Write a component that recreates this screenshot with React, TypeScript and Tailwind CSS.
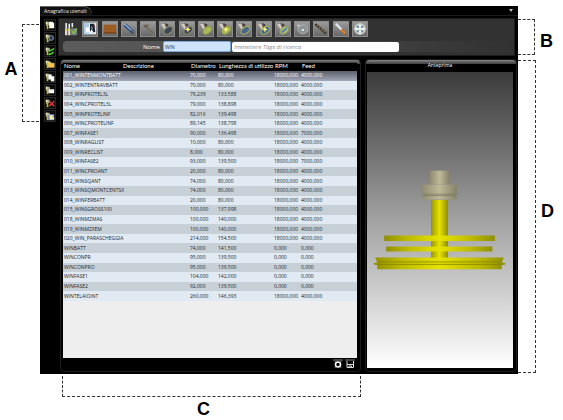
import type { ReactNode } from "react";
import clsx from "clsx";

type Row = [string, string, string, string, string];

const rows: Row[] = [
  ["001_WINTENMONTBATT", "70,000", "80,000", "18000,000", "4000,000"],
  ["002_WINTENTRAVBATT", "70,000", "80,000", "18000,000", "4000,000"],
  ["003_WINPROTEL3L", "79,239", "133,588", "18000,000", "4000,000"],
  ["004_WINCPROTEL3L", "79,000", "138,898", "18000,000", "4000,000"],
  ["005_WINPROTELINF", "82,016", "139,498", "18000,000", "4000,000"],
  ["006_WINCPROTELINF", "89,145", "138,798", "18000,000", "4000,000"],
  ["007_WINFASE1", "90,000", "136,498", "18000,000", "7000,000"],
  ["008_WINRAGLIST", "10,000", "80,000", "18000,000", "4000,000"],
  ["009_WINRECLIST", "8,000", "80,000", "18000,000", "4000,000"],
  ["010_WINFASE2", "93,000", "139,500", "18000,000", "7000,000"],
  ["011_WINCPROANT", "20,000", "80,000", "18000,000", "4000,000"],
  ["012_WINSQANT", "74,000", "80,000", "18000,000", "4000,000"],
  ["013_WINSQMONTCENTSX", "74,000", "80,000", "18000,000", "4000,000"],
  ["014_WINFERBATT", "20,000", "80,000", "18000,000", "4000,000"],
  ["015_WINSGROSS100", "100,000", "137,998", "18000,000", "4000,000"],
  ["018_WINMZMAS", "100,000", "140,000", "18000,000", "4000,000"],
  ["019_WINMZFEM", "100,000", "140,000", "18000,000", "4000,000"],
  ["020_WIN_PARASCHEGGIA", "214,000", "154,500", "18000,000", "4000,000"],
  ["WINBATT", "74,000", "141,500", "0,000", "0,000"],
  ["WINCONPR", "95,000", "139,500", "0,000", "0,000"],
  ["WINCONPRO", "95,000", "139,500", "0,000", "0,000"],
  ["WINFASE1", "104,000", "142,000", "0,000", "0,000"],
  ["WINFASE2", "92,000", "139,500", "0,000", "0,000"],
  ["WINTELAIOINT", "260,000", "146,393", "18000,000", "4000,000"],
];

const headers = ["Nome", "Descrizione", "Diametro", "Lunghezza di utilizzo", "RPM", "Feed"];

function Star() {
  return <path d="M9 5l1 2.500 2.500 1-2.500 1L9 12l-1-2.500-2.500-1 2.500-1z" fill="#fdf27a" />;
}

function Saw({ fill, stroke, star }: { fill: string; stroke: string; star?: boolean }) {
  return (
    <>
      <path d="M1 2.500l6-1 3 3-4 5z" fill="#66574e" />
      <path d="M1 2.500l4-.6L7 7l-1.500 2z" fill="#d3cdc4" />
      <path d="M6.500 1.500l3 1.500-.5 2z" fill="#2f2b2b" />
      <ellipse cx="9.500" cy="9.500" rx="5.600" ry="3.600" transform="rotate(-38 9.500 9.500)" fill={fill} stroke={stroke} strokeWidth="1.300" />
      {star && <Star />}
    </>
  );
}

const tools: { name: string; art: ReactNode }[] = [
  {
    name: "Seleziona utensili",
    art: (
      <>
        <path d="M2.500 1v6M6 2v5M9.500 1v5" stroke="#f2f2f2" strokeWidth="1.800" />
        <path d="M2.500 7v8M6 7v8" stroke="#e3e0d0" strokeWidth="2.600" />
        <path d="M1 9h6.500" stroke="#d0c43c" strokeWidth="1.200" />
        <rect x="8" y="7" width="7" height="8" rx="1" fill="#777d80" />
        <path d="M9 10.500l2 2.500 3.500-5.500" fill="none" stroke="#7bd23c" strokeWidth="1.500" />
      </>
    ),
  },
  {
    name: "Puntatore",
    art: (
      <>
        <rect x="1" y="1" width="14" height="13" fill="#e8eef3" />
        <path d="M1 1h6v13H1z" fill="#a9c8e2" />
        <path d="M3 6h4v6H3z" fill="#f6fafd" />
        <path d="M8 2h5l1 9-2 1-2-4-2 3z" fill="#172030" />
        <path d="M9.500 5l1.500 3" stroke="#c9d4e0" strokeWidth="1" />
        <path d="M12 3l2 3" stroke="#bf4f44" strokeWidth="1" />
      </>
    ),
  },
  {
    name: "Pannello",
    art: (
      <>
        <rect x="1" y="3" width="14" height="10" fill="#9a5a20" />
        <path d="M1 6.500c4-1 8 1 14 0M1 9.500c5 1 9-1 14 0" fill="none" stroke="#a2632a" strokeWidth="1" />
        <path d="M1 12.500h14" stroke="#613410" strokeWidth="1" />
      </>
    ),
  },
  {
    name: "Punta",
    art: (
      <>
        <path d="M3 3l10 9" stroke="#2c4c76" strokeWidth="4" />
        <path d="M3 2.500l10 9" stroke="#b4d2ee" strokeWidth="1.200" />
        <path d="M10 10l3 3" stroke="#405067" strokeWidth="2.500" />
      </>
    ),
  },
  {
    name: "Punta svasata",
    art: (
      <>
        <path d="M2 3l8-.5L6 8z" fill="#796b60" />
        <path d="M4 4l9 9" stroke="#5e5144" strokeWidth="2" />
        <path d="M6 6l7 7.500" stroke="#91a66d" strokeWidth="1" />
      </>
    ),
  },
  { name: "Lama", art: <Saw fill="#3d4757" stroke="#8a8f6a" /> },
  { name: "Lama preferita", art: <Saw fill="#3d4757" stroke="#8a8f6a" star /> },
  { name: "Fresa", art: <Saw fill="#aab957" stroke="#8e994a" /> },
  { name: "Fresa preferita", art: <Saw fill="#aab957" stroke="#8e994a" star /> },
  { name: "Disco", art: <Saw fill="#49678b" stroke="#a6b25a" /> },
  { name: "Disco preferito", art: <Saw fill="#49678b" stroke="#a6b25a" star /> },
  {
    name: "Disco inclinato",
    art: (
      <>
        <Saw fill="#b2bf6a" stroke="#929b60" />
        <path d="M6.500 12l6-5" stroke="#477db4" strokeWidth="2" />
      </>
    ),
  },
  {
    name: "Mola",
    art: (
      <>
        <path d="M2 3h5L5 8z" fill="#c4c4c0" />
        <ellipse cx="9" cy="8.500" rx="5.500" ry="5" fill="#8e9292" stroke="#b4b6b2" strokeWidth="1" />
        <circle cx="9" cy="9" r="1.400" fill="#d4e5f5" />
      </>
    ),
  },
  {
    name: "Punta elicoidale",
    art: (
      <>
        <path d="M1.500 2.500L13.500 13" stroke="#322b24" strokeWidth="2.800" />
        <path d="M3 3.500l10 9" stroke="#c29a4d" strokeWidth="1.200" strokeDasharray="2 1.500" />
      </>
    ),
  },
  {
    name: "Punta a gradino",
    art: (
      <>
        <path d="M2 2l7 7" stroke="#e4e8ee" strokeWidth="2.600" />
        <path d="M8 8.500l5 4.500" stroke="#d77b26" strokeWidth="3" />
      </>
    ),
  },
  {
    name: "Orientamento",
    art: (
      <>
        <circle cx="8" cy="8" r="6" fill="#a9c4d3" stroke="#e3dfc0" strokeWidth="1.200" />
        <path d="M4.500 4.500l7 7M11.500 4.500l-7 7" stroke="#5f7b8b" strokeWidth="1.200" />
        <path d="M8 2.500v11M2.500 8h11" stroke="#fff" strokeWidth="1.600" />
        <circle cx="8" cy="8" r="1.600" fill="#f4f2d0" />
      </>
    ),
  },
];

const actions: { name: string; art: ReactNode }[] = [
  { name: "Nuovo", art: <path d="M5 2h4l2 2v6H5z" fill="#fff" /> },
  {
    name: "Cerca",
    art: (
      <>
        <circle cx="7.500" cy="6" r="2.800" fill="#26374b" stroke="#8fa4bd" />
        <path d="M6 8l-3 3" stroke="#8fa4bd" strokeWidth="1.200" />
      </>
    ),
  },
  { name: "Aggiorna", art: <path d="M5 7c1-3 4-2 6-4M4 10c3 0 5 0 6-3" fill="none" stroke="#45c93a" strokeWidth="2" /> },
  { name: "Apri", art: <path d="M4 4h3l1 1h3v5H4z" fill="#f6c23f" stroke="#ffe9a0" strokeWidth=".6" /> },
  { name: "Copia", art: <path d="M4 3h4v2h3v6H7V9H4z" fill="#fff" stroke="#aaa" strokeWidth=".4" /> },
  { name: "Incolla", art: <path d="M5 5h6v5H4V6z" fill="#f4f4f4" /> },
  { name: "Elimina", art: <path d="M5 4l6 6M11 4l-6 6" stroke="#e63b35" strokeWidth="1.700" /> },
  {
    name: "Salva",
    art: (
      <>
        <path d="M4 4h7v7H4z" fill="#99a6e3" />
        <path d="M6 5h3v3h2v2H6z" fill="#fff3a0" />
      </>
    ),
  },
];

function ActionRail() {
  return (
    <nav aria-label="Azioni" className="flex w-4 shrink-0 flex-col items-end gap-px pt-[3px]">
      {actions.map((a) => (
        <button key={a.name} type="button" aria-label={a.name} className="size-3 border border-[#252525] bg-[#0b0b0b]">
          <svg viewBox="0 0 12 12" className="size-full">
            <path d="M1 2h4l1 1v2L3 7H1z" fill="#a3a38a" />
            <path d="M1 2h2v3H1z" fill="#e4e0ac" />
            <path d="M2 6h2v5H2z" fill="#c4b828" />
            {a.art}
          </svg>
        </button>
      ))}
    </nav>
  );
}

function Toolbar() {
  return (
    <section className="mr-0.5 border border-[#1c1c1c] bg-[#323232] px-1 pt-[2px] pb-[3px]">
      <div className="flex max-w-[305px] justify-between">
        {tools.map((t, i) => (
          <button
            key={t.name}
            type="button"
            aria-label={t.name}
            className={clsx(
              "size-4 border",
              i === 0
                ? "border-[#323232] bg-[#323232]"
                : "border-[#8b8b8b] bg-linear-to-b from-[#9c9c9c] to-[#686868]",
            )}
          >
            <svg viewBox="0 0 16 16" className="size-full">
              {t.art}
            </svg>
          </button>
        ))}
      </div>
      <div className="mt-1 flex h-[11px] items-center rounded-sm bg-linear-to-r from-[#5c5c5c] via-[#4a4a4a] to-[#323232]">
        <label htmlFor="nome" className="w-[97px] text-right text-[6px] leading-[10px] text-white">
          Nome
        </label>
        <input
          id="nome"
          defaultValue="WIN"
          className="ml-[3px] h-[11px] w-[68px] rounded-xs border border-[#7fa9dc] bg-[#cfe3fb] px-px text-[5px] leading-[9px] text-[#333]"
        />
        <input
          aria-label="Tags di ricerca"
          placeholder="Immettere Tags di ricerca"
          className="ml-px h-[10px] w-[167px] rounded-xs bg-white px-0.5 text-[6px] leading-[9px] placeholder:text-[#8a8a8a] placeholder:italic"
        />
      </div>
    </section>
  );
}

function ToolTable() {
  return (
    <section className="flex min-w-0 flex-[294] flex-col rounded-t-sm rounded-b border border-[#1d1d1d] bg-black bg-[linear-gradient(#858585,#3c3c3c)] bg-size-[100%_4px] bg-no-repeat pr-[3px] pl-0.5">
      <div className="grow bg-[#eeeeee]">
        <table className="h-[241px] w-full table-fixed border-collapse text-left text-[5px] leading-[9px] whitespace-nowrap text-[#20262d]">
          <colgroup>
            <col className="w-[59px]" />
            <col className="w-[68px]" />
            <col className="w-[28px]" />
            <col className="w-[56px]" />
            <col className="w-[27px]" />
            <col />
          </colgroup>
          <thead>
            <tr className="h-[11px] bg-black bg-[linear-gradient(#858585,#3c3c3c)] bg-size-[100%_3px] bg-no-repeat font-[Lato,sans-serif] text-[6px] text-white">
              {headers.map((h) => (
                <th key={h} scope="col" className="px-px py-0 font-normal">
                  {h}
                </th>
              ))}
            </tr>
          </thead>
          <tbody>
            {rows.map(([name, ...values], i) => (
              <tr
                key={name}
                className={clsx(
                  i === 0
                    ? "bg-linear-to-b from-[#5c606c] to-[#a3a8b8] text-white"
                    : i % 2 === 0
                      ? "bg-[#c8d0d7]"
                      : "bg-[#e1eaf3]",
                )}
              >
                <td className="px-px py-0">{name}</td>
                <td className="p-0" />
                {values.map((v, k) => (
                  <td key={k} className="p-0">
                    {v}
                  </td>
                ))}
              </tr>
            ))}
          </tbody>
        </table>
      </div>
      <footer className="flex h-[13px] items-start justify-end gap-0.5 pt-px pr-0.5">
        <button type="button" aria-label="Impostazioni" className="h-2.5 w-2.5">
          <svg viewBox="0 0 10 10" className="size-full">
            <path d="M0 1h10" stroke="#888" strokeWidth="1" />
            <circle cx="5" cy="5.500" r="2.500" fill="none" stroke="#fff" strokeWidth="1.600" />
            <path d="M2 2.500l1 1M8 2.500l-1 1M2 8.500l1-1M8 8.500l-1-1" stroke="#ddd" strokeWidth="1" />
          </svg>
        </button>
        <button type="button" aria-label="Salva elenco" className="h-2.5 w-2.5">
          <svg viewBox="0 0 10 10" className="size-full">
            <path d="M0 1h10" stroke="#888" strokeWidth="1" />
            <path d="M2 2v6.500h6.500V2M2 5.500h6.500M4 8.500v-1.500h2.500v1.500" fill="none" stroke="#d8d8d8" strokeWidth="1" />
          </svg>
        </button>
      </footer>
    </section>
  );
}

function Preview() {
  return (
    <section className="flex min-w-0 flex-[146] flex-col rounded-t-sm rounded-b border border-[#1d1d1d] bg-black bg-[linear-gradient(#858585,#3c3c3c)] bg-size-[100%_4px] bg-no-repeat pr-[3px] pb-[3px] pl-px">
      <h2 className="h-3 pt-px text-center text-[5px] leading-[9px] text-white">Anteprima</h2>
      <div className="min-h-0 grow bg-linear-to-b from-[#3c3c3c] via-[#a2a2a2] to-white">
        <svg viewBox="367 71 146 297" preserveAspectRatio="xMidYMid meet" className="size-full" role="img" aria-label="Anteprima utensile">
          <defs>
            <linearGradient id="metal">
              <stop offset="0" stopColor="#8f8c71" />
              <stop offset=".5" stopColor="#bdb998" />
              <stop offset="1" stopColor="#85826a" />
            </linearGradient>
            <linearGradient id="shaft">
              <stop offset="0" stopColor="#989600" />
              <stop offset=".5" stopColor="#e6e300" />
              <stop offset="1" stopColor="#8e8c00" />
            </linearGradient>
            <linearGradient id="disc">
              <stop offset="0" stopColor="#8f8e00" />
              <stop offset=".2" stopColor="#bcb900" />
              <stop offset=".5" stopColor="#e6e300" />
              <stop offset=".8" stopColor="#bcb900" />
              <stop offset="1" stopColor="#8f8e00" />
            </linearGradient>
          </defs>
          <path d="M430 170h19.500v14H430z" fill="url(#metal)" />
          <path d="M422 184h35v9l-2 1.500 2 1v2l-2 1.500h-31l-2-1.500v-2l2-1-2-1.500z" fill="url(#metal)" />
          <path d="M422 193.500h35M424 195h31" stroke="#77745c" strokeWidth=".7" />
          <path d="M431 199.500h17V258h-17z" fill="url(#shaft)" />
          <path d="M384 235h111v5.500H384z" fill="url(#disc)" />
          <path d="M386 246h106.500v5H386z" fill="url(#disc)" />
          <path d="M375 257h129l-2 5 3.500 1v1h-3.500v5H377v-5h-3.500v-1l3.500-1z" fill="url(#disc)" />
          <path d="M377 261.500h125M374 264h131" stroke="#858300" strokeWidth=".8" />
        </svg>
      </div>
    </section>
  );
}

function Mark({ children }: { children: string }) {
  return <span className="text-[18px] leading-5 font-bold text-black">{children}</span>;
}

export default function App() {
  return (
    <main className="bg-white pt-1.5 font-['Open_Sans','Noto_Sans',sans-serif]">
      <div className="flex">
        <aside className="flex w-10 shrink-0 items-start pt-[18px] font-['Liberation_Sans',Arial,sans-serif]">
          <div className="flex h-[98px] w-[22px] items-center justify-center pb-2">
            <Mark>A</Mark>
          </div>
          <div className="h-[98px] w-[17px] border-y border-l border-dashed border-[#333]" />
        </aside>

        <div className="flex h-[368px] min-w-0 grow flex-col bg-black">
          <header className="flex h-[9px] items-center justify-between pr-1">
            <h1 className="h-[9px] w-[52px] rounded-tr-lg border-t border-[#666] bg-[#111] pl-1 text-[5px] leading-[8px] whitespace-nowrap text-[#eee]">
              Anagrafica utensili
            </h1>
            <button type="button" aria-label="Menu" className="h-1 w-1.5">
              <svg viewBox="0 0 6 4" className="size-full">
                <path d="M1 0h4L3 3z" fill="#bbb" />
              </svg>
            </button>
          </header>
          <div className="flex min-h-0 grow border-t border-[#1c1c1c]">
            <ActionRail />
            <div className="flex min-w-0 grow flex-col gap-[3px] pt-[2px] pr-px pb-0.5 pl-0.5">
              <Toolbar />
              <div className="flex min-h-0 grow gap-1 pl-0.5">
                <ToolTable />
                <Preview />
              </div>
            </div>
          </div>
        </div>

        <aside className="flex w-[45px] shrink-0 flex-col pt-[13px] font-['Liberation_Sans',Arial,sans-serif]">
          <div className="flex items-center gap-[5px]">
            <div className="h-9 w-[17px] border-y border-r border-dashed border-[#333]" />
            <div className="flex pt-2">
              <Mark>B</Mark>
            </div>
          </div>
          <div className="mt-[5px] flex items-center gap-[5px]">
            <div className="h-[313px] w-[18px] border-y border-r border-dashed border-[#333]" />
            <div className="flex pb-3">
              <Mark>D</Mark>
            </div>
          </div>
        </aside>
      </div>

      <div className="mt-0.5 mr-[202px] ml-[62px] text-center font-['Liberation_Sans',Arial,sans-serif]">
        <div className="h-[21px] border-x border-b border-dashed border-[#333]" />
        <div className="pt-[2px] pr-4 leading-5">
          <Mark>C</Mark>
        </div>
      </div>
    </main>
  );
}
